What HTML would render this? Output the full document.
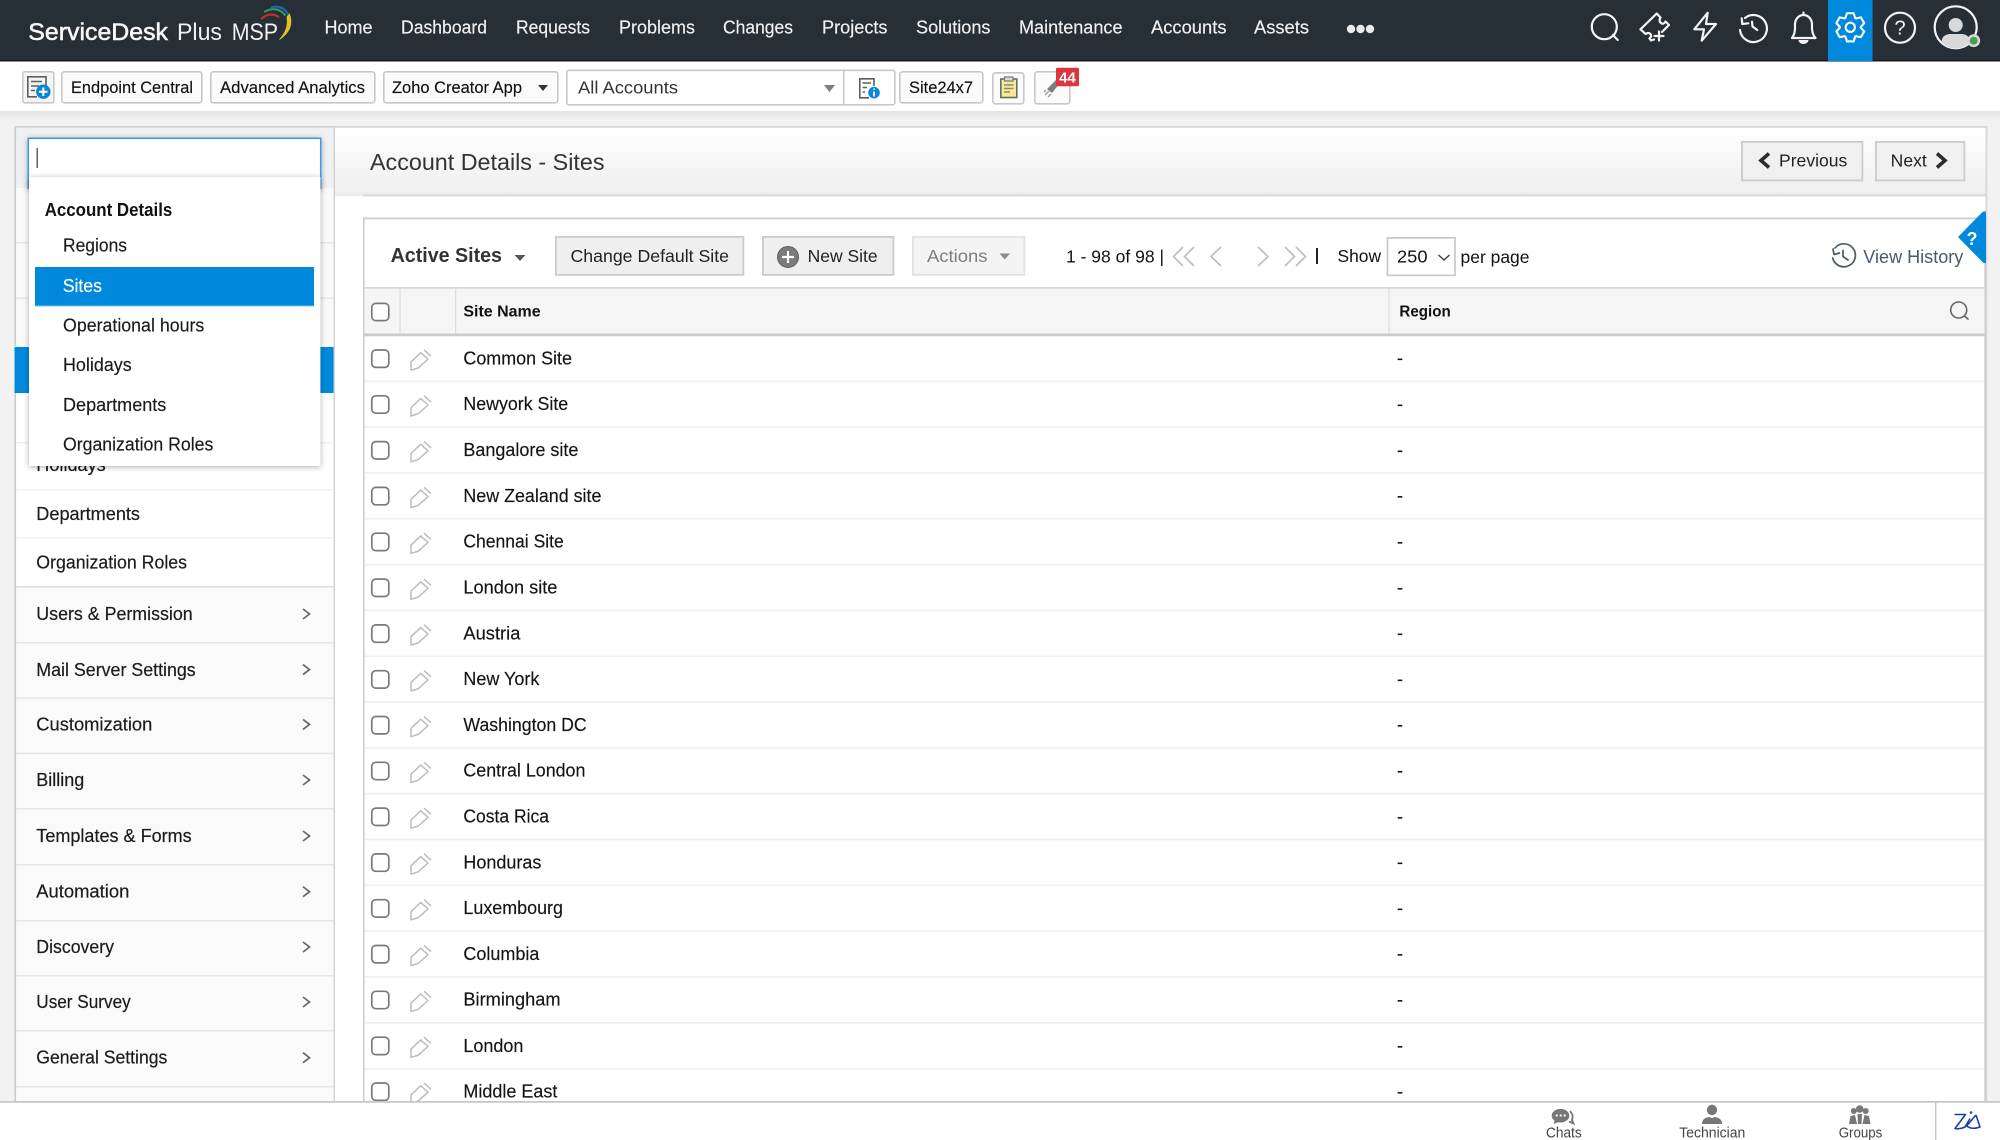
<!DOCTYPE html>
<html lang="en">
<head>
<meta charset="utf-8">
<title>ServiceDesk Plus MSP - Account Details - Sites</title>
<style>
html,body{margin:0;padding:0;width:2000px;height:1140px;overflow:hidden;background:#f2f2f2}
svg{display:block;filter:blur(.3px)}
text{font-family:"Liberation Sans",Arial,sans-serif;white-space:pre}
.nav{font-size:18px;fill:#f0f2f3;stroke:#f0f2f3;stroke-width:.15}
.tb{font-size:17px;fill:#111;stroke:#111;stroke-width:.15}
.side{font-size:18px;fill:#1c1c1c;stroke:#1c1c1c;stroke-width:.2}
.dd{font-size:18px;fill:#1a1a1a;stroke:#1a1a1a;stroke-width:.15}
.row{font-size:18px;fill:#141414;stroke:#141414;stroke-width:.15}
.btn{font-size:17.5px;fill:#222}
.th{font-size:16px;font-weight:bold;fill:#111}
.bot{font-size:14.5px;fill:#444}
.ic{fill:none;stroke:#f2f4f5;stroke-width:2.2;stroke-linecap:round;stroke-linejoin:round}
.pg{fill:none;stroke:#bcbcbc;stroke-width:1.6}
.ch{fill:none;stroke:#666;stroke-width:1.7}
.sep{fill:#efefef}
.cb{fill:#fff;stroke:#7a7a7a;stroke-width:1.7}
</style>
</head>
<body>
<svg xmlns="http://www.w3.org/2000/svg" width="2000" height="1140" viewBox="0 0 2000 1140">
<defs>
<linearGradient id="hg" x1="0" y1="0" x2="0" y2="1"><stop offset="0" stop-color="#fff"/><stop offset="1" stop-color="#eeeeee"/></linearGradient>
<linearGradient id="sh" x1="0" y1="0" x2="0" y2="1"><stop offset="0" stop-color="#e3e3e3"/><stop offset="1" stop-color="#f3f3f3"/></linearGradient>
<filter id="ds" x="-10%" y="-10%" width="120%" height="120%"><feDropShadow dx="0" dy="1" stdDeviation="3" flood-color="#000" flood-opacity=".32"/></filter>
<g id="pen" fill="none" stroke="#bcbcbc" stroke-width="1.5" stroke-linejoin="round"><path d="M411 3.2 L420.7 -6 L428 .5 L418.3 9.2 L411 11.5 Z"/><path d="M424 -8.8 L431 -2.5"/></g>
</defs>

<!-- page background -->
<rect width="2000" height="1140" fill="#f2f2f2"/>
<rect x="0" y="111" width="2000" height="10" fill="url(#sh)"/>

<!-- header -->
<rect x="0" y="0" width="2000" height="60" fill="#262e36"/>
<rect x="0" y="60" width="2000" height="1.5" fill="#14191e"/>
<rect x="1828" y="0" width="44.5" height="61" fill="#0089dc"/>
<text x="28.3" y="40" font-size="24" fill="#f6f7f8" stroke="#f6f7f8" stroke-width=".55" textLength="139.7" lengthAdjust="spacingAndGlyphs">ServiceDesk</text>
<text x="177" y="40" font-size="24" fill="#f0f1f2" textLength="45" lengthAdjust="spacingAndGlyphs">Plus</text>
<text x="231.7" y="40" font-size="24" fill="#f0f1f2" textLength="46.3" lengthAdjust="spacingAndGlyphs">MSP</text>
<g fill="none" stroke-linecap="round">
<path d="M261.7 18.5 Q270 11.5 278.3 16.7" stroke="#c62f2f" stroke-width="2.2"/>
<path d="M265 11.5 Q277 5.5 285 15" stroke="#2f9a48" stroke-width="2.2"/>
<path d="M271.7 7.3 Q285 4 290 19" stroke="#1c62b5" stroke-width="2.4"/>
</g>
<path d="M289.5 14 Q295 29 279.5 39.5 Q289 29 287 17 Z" fill="#e6bf2c" stroke="#e6bf2c" stroke-width=".8"/>
<text class="nav" x="324.5" y="33.5" textLength="48" lengthAdjust="spacingAndGlyphs">Home</text>
<text class="nav" x="401" y="33.5" textLength="86" lengthAdjust="spacingAndGlyphs">Dashboard</text>
<text class="nav" x="516" y="33.5" textLength="74" lengthAdjust="spacingAndGlyphs">Requests</text>
<text class="nav" x="619" y="33.5" textLength="76" lengthAdjust="spacingAndGlyphs">Problems</text>
<text class="nav" x="723" y="33.5" textLength="70" lengthAdjust="spacingAndGlyphs">Changes</text>
<text class="nav" x="822" y="33.5" textLength="65.5" lengthAdjust="spacingAndGlyphs">Projects</text>
<text class="nav" x="916" y="33.5" textLength="74.5" lengthAdjust="spacingAndGlyphs">Solutions</text>
<text class="nav" x="1019" y="33.5" textLength="103.5" lengthAdjust="spacingAndGlyphs">Maintenance</text>
<text class="nav" x="1151" y="33.5" textLength="75.5" lengthAdjust="spacingAndGlyphs">Accounts</text>
<text class="nav" x="1254" y="33.5" textLength="55" lengthAdjust="spacingAndGlyphs">Assets</text>
<g fill="#e8eaec"><circle cx="1351" cy="29" r="4.2"/><circle cx="1360.5" cy="29" r="4.2"/><circle cx="1370" cy="29" r="4.2"/></g>

<!-- header icons -->
<g class="ic">
<circle cx="1604.3" cy="26.7" r="12.5"/><path d="M1613 35 L1617.7 40"/>
<path d="M1640.5 29.3 L1656.7 13.5 L1660.5 17.5 Q1658.5 21 1661 23 Q1663.5 25 1665.5 21.5 L1669 25 L1662 32"/>
<path d="M1640.5 29.3 L1645.5 34 Q1648.5 32 1650.5 34 Q1652 36.5 1649.5 38.5 L1651 40.5 L1654 39.5"/>
<path d="M1659 31.5 V40.5 M1654.5 36 H1663.5"/>
<path d="M1707.7 12.7 L1694.3 29.3 L1704 29.3 L1701.7 40.7 L1716 24 L1706 24 Z"/>
<path d="M1745 18 A13.5 13.5 0 1 1 1740 30"/><path d="M1741.7 18.3 L1742.3 24 L1748.3 23.3"/><path d="M1752 21.7 L1752.5 26.5 L1757.3 30"/>
<path d="M1792 38 Q1795 34 1795 28 V24.5 A8.5 9.5 0 0 1 1812 24.5 V28 Q1812 34 1815.5 38 Z"/><path d="M1803.5 12.5 V15"/>
<g transform="translate(1850.3 27.3)"><polygon points="-4.9,-9.3 -3.3,-14.1 3.3,-14.1 4.9,-9.3 5.6,-8.9 10.6,-9.9 13.9,-4.2 10.5,-.4 10.5,.4 13.9,4.2 10.6,9.9 5.6,8.9 4.9,9.3 3.3,14.1 -3.3,14.1 -4.9,9.3 -5.6,8.9 -10.6,9.9 -13.9,4.2 -10.5,.4 -10.5,-.4 -13.9,-4.2 -10.6,-9.9 -5.6,-8.9"/><circle r="4.6"/></g>
<circle cx="1900" cy="27.7" r="15"/>
<circle cx="1955.7" cy="27.3" r="21"/>
</g>
<path d="M1798.5 40 H1808.5 A5 4 0 0 1 1798.5 40 Z" fill="#f2f4f5"/>
<text x="1900" y="34.5" font-size="20" fill="#f2f4f5" text-anchor="middle">?</text>
<circle cx="1955.7" cy="25" r="7" fill="#d9d9d9"/>
<path d="M1941.5 42 Q1942 34.5 1950 34 H1962 Q1969.5 34.5 1970 42 Q1964 48.5 1955.7 48.5 Q1947 48.5 1941.5 42 Z" fill="#d9d9d9"/>
<circle cx="1973.7" cy="40.7" r="5.2" fill="#4a9f4e" stroke="#d9d9d9" stroke-width="2.5"/>

<!-- toolbar -->
<rect x="0" y="61.5" width="2000" height="49.5" fill="#fff"/>
<g fill="#fbfbfb" stroke="#c8c8c8" stroke-width="1.6">
<rect x="22.8" y="71.8" width="31" height="31" rx="2" fill="#f4f4f4"/>
<rect x="61.8" y="71.8" width="140" height="31" rx="2.5"/>
<rect x="210.8" y="71.8" width="164" height="31" rx="2.5"/>
<rect x="383.8" y="71.8" width="174" height="31" rx="2.5"/>
<rect x="566.8" y="70.3" width="328" height="34.5" rx="2" fill="#fff"/>
<rect x="899.8" y="71.8" width="83" height="31" rx="2.5"/>
<rect x="992.8" y="72.8" width="31" height="31" rx="2.5"/>
<rect x="1034.8" y="71.8" width="35" height="32" rx="2.5"/>
</g>
<rect x="843" y="70" width="1.5" height="35" fill="#c8c8c8"/>
<g fill="none" stroke="#5a5f64" stroke-width="1.6">
<path d="M46 88 V76.8 H27.8 V96.8 H37"/><path d="M31 81.5 H42 M31 86 H39 M31 90.5 H35"/>
<path d="M874 86 V78.8 H859.8 V97.8 H869"/><path d="M862.5 83 H871 M862.5 87.5 H867 M862.5 92 H865"/>
</g>
<circle cx="43.3" cy="91.7" r="7.2" fill="#0a86d8"/><path d="M43.3 87.5 V96 M39 91.7 H47.5" stroke="#fff" stroke-width="2"/>
<circle cx="874" cy="92.7" r="5.8" fill="#0a86d8"/><path d="M874 91.5 V96.5 M874 88.5 V89.8" stroke="#fff" stroke-width="1.7"/>
<rect x="1000.8" y="79" width="16" height="18.5" fill="#f8e998" stroke="#6a6a6a" stroke-width="1.6"/>
<rect x="1004.5" y="77" width="8.5" height="4" fill="#ddd" stroke="#777" stroke-width="1.2"/>
<path d="M1004 85 H1013.5 M1004 88.5 H1013.5 M1004 92 H1010" stroke="#8f8a60" stroke-width="1.5"/>
<path d="M1047 89 L1056 80 L1060 83 L1052 93 Z" fill="#7d7d7d"/>
<path d="M1045 95 L1049 91 M1048 97 L1051 94 M1044 92 L1046 90" stroke="#9c9c9c" stroke-width="1.4"/>
<rect x="1056" y="67.7" width="23" height="18.5" rx="1.5" fill="#d9363e"/>
<text x="1067.5" y="82.3" font-size="15" font-weight="bold" fill="#fff" text-anchor="middle">44</text>
<text class="tb" x="71" y="93" textLength="122" lengthAdjust="spacingAndGlyphs">Endpoint Central</text>
<text class="tb" x="220" y="93" textLength="145" lengthAdjust="spacingAndGlyphs">Advanced Analytics</text>
<text class="tb" x="392" y="93" textLength="130" lengthAdjust="spacingAndGlyphs">Zoho Creator App</text>
<path d="M538 85 H548 L543 91 Z" fill="#333"/>
<text class="tb" x="578" y="93.3" textLength="100" lengthAdjust="spacingAndGlyphs" style="fill:#333;stroke:none;font-size:17.5px">All Accounts</text>
<path d="M824 85 H835 L829.5 92 Z" fill="#7d7d7d"/>
<text class="tb" x="909" y="93" textLength="64" lengthAdjust="spacingAndGlyphs">Site24x7</text>

<!-- sidebar -->
<rect x="15" y="127" width="320" height="980" fill="#fff"/>
<rect x="16" y="128" width="318" height="60" fill="#eff1f3"/>
<rect x="16" y="188" width="318" height="159" fill="#fafafa"/>
<rect x="16" y="587" width="318" height="520" fill="#fafafa"/>
<rect x="14.5" y="347" width="319.5" height="46" fill="#0089dc"/>
<rect x="14.5" y="126.5" width="1.6" height="220" fill="#cbcbcb"/>
<rect x="14.5" y="393" width="1.6" height="713" fill="#cbcbcb"/>
<rect x="333.5" y="126.5" width="1.6" height="980" fill="#d2d2d2"/>
<rect x="14.5" y="126" width="320" height="1.8" fill="#d2d2d2"/>
<g fill="#e6e6e6">
<rect x="16" y="242" width="318" height="1.5"/><rect x="16" y="297.5" width="318" height="1.5"/>
<rect x="16" y="442" width="318" height="1.5" fill="#f0f0f0"/><rect x="16" y="489" width="318" height="1.5" fill="#f2f2f2"/>
<rect x="16" y="537" width="318" height="1.5" fill="#f2f2f2"/>
<rect x="16" y="586" width="318" height="1.5" fill="#dedede"/>
<rect x="16" y="642" width="318" height="1.5"/><rect x="16" y="697.5" width="318" height="1.5"/><rect x="16" y="752.7" width="318" height="1.5"/>
<rect x="16" y="808" width="318" height="1.5"/><rect x="16" y="864" width="318" height="1.5"/><rect x="16" y="920" width="318" height="1.5"/>
<rect x="16" y="975" width="318" height="1.5"/><rect x="16" y="1030" width="318" height="1.5"/><rect x="16" y="1086" width="318" height="1.5"/>
</g>
<text class="side" x="36.3" y="471" textLength="69.4" lengthAdjust="spacingAndGlyphs">Holidays</text>
<text class="side" x="36.3" y="520" textLength="103.7" lengthAdjust="spacingAndGlyphs">Departments</text>
<text class="side" x="36.3" y="568.5" textLength="150.7" lengthAdjust="spacingAndGlyphs">Organization Roles</text>
<text class="side" x="36.3" y="620" textLength="156.4" lengthAdjust="spacingAndGlyphs">Users &amp; Permission</text>
<text class="side" x="36.3" y="675.8" textLength="159.4" lengthAdjust="spacingAndGlyphs">Mail Server Settings</text>
<text class="side" x="36.3" y="730.6" textLength="116" lengthAdjust="spacingAndGlyphs">Customization</text>
<text class="side" x="36.3" y="786.2" textLength="48" lengthAdjust="spacingAndGlyphs">Billing</text>
<text class="side" x="36.3" y="842" textLength="155.4" lengthAdjust="spacingAndGlyphs">Templates &amp; Forms</text>
<text class="side" x="36.3" y="897.6" textLength="93" lengthAdjust="spacingAndGlyphs">Automation</text>
<text class="side" x="36.3" y="953" textLength="77.7" lengthAdjust="spacingAndGlyphs">Discovery</text>
<text class="side" x="36.3" y="1008" textLength="94.4" lengthAdjust="spacingAndGlyphs">User Survey</text>
<text class="side" x="36.3" y="1063.6" textLength="131" lengthAdjust="spacingAndGlyphs">General Settings</text>
<path class="ch" stroke-width="1.6" d="M303 609 L309.5 614 L303 619 M303 664.6 L309.5 669.6 L303 674.6 M303 719.4 L309.5 724.4 L303 729.4 M303 775 L309.5 780 L303 785 M303 831 L309.5 836 L303 841 M303 886.7 L309.5 891.7 L303 896.7 M303 942 L309.5 947 L303 952 M303 997 L309.5 1002 L303 1007 M303 1052.7 L309.5 1057.7 L303 1062.7"/>

<!-- main panel -->
<rect x="335" y="127" width="1651" height="980" fill="#fff"/>
<rect x="335" y="127" width="1651" height="68" fill="url(#hg)"/>
<rect x="335" y="126" width="1651" height="1.8" fill="#d8d8d8"/>
<rect x="335" y="194.5" width="28" height="1.6" fill="#ececec"/>
<rect x="363" y="194.5" width="1623" height="1.8" fill="#d6d6d6"/>
<rect x="1985.5" y="126" width="1.8" height="980" fill="#d8d8d8"/>
<text x="370" y="170" font-size="23.5" fill="#333" textLength="234.5" lengthAdjust="spacingAndGlyphs">Account Details - Sites</text>
<g fill="#f0f0f0" stroke="#cbcbcb" stroke-width="1.8">
<rect x="1741.9" y="141.9" width="120.5" height="38.5"/>
<rect x="1875.9" y="141.9" width="88.5" height="38.5"/>
</g>
<path d="M1769 153.5 L1761 160.5 L1769 167.5" fill="none" stroke="#2c2c2c" stroke-width="3.6"/>
<path d="M1937 153.5 L1945 160.5 L1937 167.5" fill="none" stroke="#2c2c2c" stroke-width="3.6"/>
<text class="btn" x="1779" y="166.7" textLength="68.3" lengthAdjust="spacingAndGlyphs">Previous</text>
<text class="btn" x="1890.7" y="166.7" textLength="36" lengthAdjust="spacingAndGlyphs">Next</text>

<!-- table card -->
<rect x="363" y="217.5" width="1622.5" height="1.8" fill="#cdcdcd"/>
<rect x="363" y="217.5" width="1.6" height="890" fill="#cdcdcd"/>
<rect x="1984.3" y="217.5" width="1.6" height="890" fill="#cdcdcd"/>
<text x="390.6" y="262" font-size="20.5" font-weight="bold" fill="#333" textLength="111.4" lengthAdjust="spacingAndGlyphs">Active Sites</text>
<path d="M514.5 255 H525.5 L520 261 Z" fill="#555"/>
<g stroke-width="1.8">
<rect x="555.9" y="236.9" width="187.5" height="38" fill="#efefef" stroke="#cbcbcb"/>
<rect x="762.9" y="236.9" width="130.5" height="38" fill="#efefef" stroke="#cbcbcb"/>
<rect x="912.9" y="236.9" width="111.5" height="38" fill="#f4f4f4" stroke="#e2e2e2"/>
</g>
<text class="btn" x="570.5" y="262" textLength="158.5" lengthAdjust="spacingAndGlyphs">Change Default Site</text>
<circle cx="788" cy="257" r="10.5" fill="#7b7b7b" stroke="#5e5e5e" stroke-width="1"/>
<path d="M788 251 V263 M782 257 H794" stroke="#fff" stroke-width="2.2"/>
<text class="btn" x="807.6" y="262" textLength="70" lengthAdjust="spacingAndGlyphs">New Site</text>
<text class="btn" x="927" y="262" textLength="60.5" lengthAdjust="spacingAndGlyphs" style="fill:#7d7d7d">Actions</text>
<path d="M999.5 253.5 H1010 L1004.7 259.5 Z" fill="#8c8c8c"/>
<text class="btn" x="1066" y="262.5" textLength="98" lengthAdjust="spacingAndGlyphs" style="fill:#111">1 - 98 of 98 |</text>
<path class="pg" d="M1183 247 L1173.5 256.5 L1183 266 M1194 247 L1184.5 256.5 L1194 266 M1221 247 L1211 256.5 L1221 266 M1258 247 L1268 256.5 L1258 266 M1285 247 L1294.5 256.5 L1285 266 M1296 247 L1305.5 256.5 L1296 266"/>
<rect x="1316" y="248" width="2" height="16" fill="#222"/>
<text class="btn" x="1337.5" y="262" textLength="43.5" lengthAdjust="spacingAndGlyphs" style="fill:#111">Show</text>
<rect x="1387.5" y="237.9" width="67.5" height="37.5" fill="#fff" stroke="#c8c8c8" stroke-width="1.7"/>
<text class="btn" x="1397" y="262.5" textLength="30.5" lengthAdjust="spacingAndGlyphs" style="fill:#111">250</text>
<path d="M1438.5 255 L1444 260 L1449.5 255" fill="none" stroke="#444" stroke-width="1.5"/>
<text class="btn" x="1460.5" y="263" textLength="69" lengthAdjust="spacingAndGlyphs" style="fill:#111">per page</text>
<g fill="none" stroke="#4a5a68" stroke-width="1.7" stroke-linecap="round" stroke-linejoin="round" transform="translate(1 0)">
<path d="M1834 248 A11.5 11.5 0 1 1 1831.7 258"/><path d="M1832 249 L1833 254.5 L1838.5 253"/><path d="M1842 250.5 V256.5 L1847 260"/>
</g>
<text x="1863.3" y="263" font-size="18" fill="#4a5a68" textLength="100" lengthAdjust="spacingAndGlyphs">View History</text>
<path d="M1958 237 L1982 212.5 Q1983.5 211 1986 211.5 V263 Q1984 263.5 1982.5 262 Z" fill="#0089dc"/>
<text x="1972" y="245" font-size="18" font-weight="bold" fill="#fff" text-anchor="middle">?</text>

<!-- table header -->
<rect x="364.5" y="288" width="1620" height="46" fill="#f5f5f5"/>
<rect x="364.5" y="287" width="1620" height="1.8" fill="#d8d8d8"/>
<rect x="364.5" y="333.5" width="1620" height="2.8" fill="#cccccc"/>
<g fill="#dcdcdc"><rect x="399.5" y="288" width="1.2" height="46"/><rect x="455" y="288" width="1.2" height="46"/><rect x="1388.5" y="288" width="1.2" height="46"/></g>
<rect class="cb" x="371.8" y="303.4" width="17" height="17.2" rx="4"/>
<text class="th" x="463.4" y="316.6" textLength="77.2" lengthAdjust="spacingAndGlyphs">Site Name</text>
<text class="th" x="1399.4" y="316.6" textLength="51.3" lengthAdjust="spacingAndGlyphs">Region</text>
<circle cx="1958.7" cy="310" r="8" fill="none" stroke="#666" stroke-width="1.6"/>
<path d="M1964.5 316 L1968.5 319.5" stroke="#666" stroke-width="1.6"/>

<!-- table rows -->
<g>
<rect class="sep" x="365" y="380.5" width="1619" height="1.7"/>
<rect class="sep" x="365" y="426.3" width="1619" height="1.7"/>
<rect class="sep" x="365" y="472.1" width="1619" height="1.7"/>
<rect class="sep" x="365" y="517.9" width="1619" height="1.7"/>
<rect class="sep" x="365" y="563.7" width="1619" height="1.7"/>
<rect class="sep" x="365" y="609.5" width="1619" height="1.7"/>
<rect class="sep" x="365" y="655.4" width="1619" height="1.7"/>
<rect class="sep" x="365" y="701.2" width="1619" height="1.7"/>
<rect class="sep" x="365" y="747" width="1619" height="1.7"/>
<rect class="sep" x="365" y="792.8" width="1619" height="1.7"/>
<rect class="sep" x="365" y="838.6" width="1619" height="1.7"/>
<rect class="sep" x="365" y="884.4" width="1619" height="1.7"/>
<rect class="sep" x="365" y="930.2" width="1619" height="1.7"/>
<rect class="sep" x="365" y="976" width="1619" height="1.7"/>
<rect class="sep" x="365" y="1022" width="1619" height="1.7"/>
<rect class="sep" x="365" y="1068" width="1619" height="1.7"/>
</g>
<g>
<rect class="cb" x="371.8" y="350" width="17" height="17.4" rx="4"/><use href="#pen" y="358.7"/><text class="row" x="463.4" y="364.4" textLength="108.6" lengthAdjust="spacingAndGlyphs">Common Site</text><text class="row" x="1397" y="364.2">-</text>
<rect class="cb" x="371.8" y="395.8" width="17" height="17.4" rx="4"/><use href="#pen" y="404.5"/><text class="row" x="463.4" y="410.2" textLength="104.8" lengthAdjust="spacingAndGlyphs">Newyork Site</text><text class="row" x="1397" y="410">-</text>
<rect class="cb" x="371.8" y="441.6" width="17" height="17.4" rx="4"/><use href="#pen" y="450.3"/><text class="row" x="463.4" y="456" textLength="115" lengthAdjust="spacingAndGlyphs">Bangalore site</text><text class="row" x="1397" y="455.8">-</text>
<rect class="cb" x="371.8" y="487.4" width="17" height="17.4" rx="4"/><use href="#pen" y="496.1"/><text class="row" x="463.4" y="501.8" textLength="138" lengthAdjust="spacingAndGlyphs">New Zealand site</text><text class="row" x="1397" y="501.6">-</text>
<rect class="cb" x="371.8" y="533.2" width="17" height="17.4" rx="4"/><use href="#pen" y="541.9"/><text class="row" x="463.4" y="547.6" textLength="100.4" lengthAdjust="spacingAndGlyphs">Chennai Site</text><text class="row" x="1397" y="547.4">-</text>
<rect class="cb" x="371.8" y="579.1" width="17" height="17.4" rx="4"/><use href="#pen" y="587.8"/><text class="row" x="463.4" y="593.5" textLength="94" lengthAdjust="spacingAndGlyphs">London site</text><text class="row" x="1397" y="593.3">-</text>
<rect class="cb" x="371.8" y="624.9" width="17" height="17.4" rx="4"/><use href="#pen" y="633.6"/><text class="row" x="463.4" y="639.3" textLength="57" lengthAdjust="spacingAndGlyphs">Austria</text><text class="row" x="1397" y="639.1">-</text>
<rect class="cb" x="371.8" y="670.7" width="17" height="17.4" rx="4"/><use href="#pen" y="679.4"/><text class="row" x="463.4" y="685.1" textLength="76" lengthAdjust="spacingAndGlyphs">New York</text><text class="row" x="1397" y="684.9">-</text>
<rect class="cb" x="371.8" y="716.5" width="17" height="17.4" rx="4"/><use href="#pen" y="725.2"/><text class="row" x="463.4" y="730.9" textLength="123.3" lengthAdjust="spacingAndGlyphs">Washington DC</text><text class="row" x="1397" y="730.7">-</text>
<rect class="cb" x="371.8" y="762.3" width="17" height="17.4" rx="4"/><use href="#pen" y="771"/><text class="row" x="463.4" y="776.7" textLength="122" lengthAdjust="spacingAndGlyphs">Central London</text><text class="row" x="1397" y="776.5">-</text>
<rect class="cb" x="371.8" y="808.1" width="17" height="17.4" rx="4"/><use href="#pen" y="816.8"/><text class="row" x="463.4" y="822.5" textLength="85.6" lengthAdjust="spacingAndGlyphs">Costa Rica</text><text class="row" x="1397" y="822.3">-</text>
<rect class="cb" x="371.8" y="853.9" width="17" height="17.4" rx="4"/><use href="#pen" y="862.6"/><text class="row" x="463.4" y="868.3" textLength="78" lengthAdjust="spacingAndGlyphs">Honduras</text><text class="row" x="1397" y="868.1">-</text>
<rect class="cb" x="371.8" y="899.7" width="17" height="17.4" rx="4"/><use href="#pen" y="908.4"/><text class="row" x="463.4" y="914.1" textLength="99.6" lengthAdjust="spacingAndGlyphs">Luxembourg</text><text class="row" x="1397" y="913.9">-</text>
<rect class="cb" x="371.8" y="945.5" width="17" height="17.4" rx="4"/><use href="#pen" y="954.2"/><text class="row" x="463.4" y="959.9" textLength="76" lengthAdjust="spacingAndGlyphs">Columbia</text><text class="row" x="1397" y="959.7">-</text>
<rect class="cb" x="371.8" y="991.3" width="17" height="17.4" rx="4"/><use href="#pen" y="1000"/><text class="row" x="463.4" y="1005.7" textLength="97.2" lengthAdjust="spacingAndGlyphs">Birmingham</text><text class="row" x="1397" y="1005.5">-</text>
<rect class="cb" x="371.8" y="1037.2" width="17" height="17.4" rx="4"/><use href="#pen" y="1045.9"/><text class="row" x="463.4" y="1051.8" textLength="60" lengthAdjust="spacingAndGlyphs">London</text><text class="row" x="1397" y="1051.5">-</text>
<rect class="cb" x="371.8" y="1083" width="17" height="17.4" rx="4"/><use href="#pen" y="1091.7"/><text class="row" x="463.4" y="1097.6" textLength="94" lengthAdjust="spacingAndGlyphs">Middle East</text><text class="row" x="1397" y="1097.3">-</text>
</g>

<!-- settings search dropdown -->
<rect x="28.3" y="138.3" width="292.4" height="50" fill="#fff" stroke="#3d9be0" stroke-width="1.5" filter="url(#ds)"/>
<rect x="36.5" y="148" width="1.4" height="20" fill="#555"/>
<rect x="29" y="177" width="291.4" height="289" fill="#fff" filter="url(#ds)"/>
<rect x="35" y="267" width="279" height="39" fill="#0089dc"/>
<rect x="35" y="305.5" width="279" height="1" fill="#7cc0ea"/>
<text x="44.7" y="216" font-size="18" font-weight="bold" fill="#111" textLength="127.6" lengthAdjust="spacingAndGlyphs">Account Details</text>
<text class="dd" x="63" y="251.7" textLength="64" lengthAdjust="spacingAndGlyphs">Regions</text>
<text class="dd" x="62.7" y="292" textLength="39.3" lengthAdjust="spacingAndGlyphs" style="fill:#fff;stroke:#fff">Sites</text>
<text class="dd" x="63" y="331.7" textLength="141.3" lengthAdjust="spacingAndGlyphs">Operational hours</text>
<text class="dd" x="63" y="371" textLength="68.7" lengthAdjust="spacingAndGlyphs">Holidays</text>
<text class="dd" x="63" y="411" textLength="103.3" lengthAdjust="spacingAndGlyphs">Departments</text>
<text class="dd" x="63" y="450.3" textLength="150.3" lengthAdjust="spacingAndGlyphs">Organization Roles</text>

<!-- bottom bar -->
<rect x="0" y="1102" width="2000" height="38" fill="#fff"/>
<rect x="0" y="1101" width="2000" height="1.8" fill="#c8c8c8"/>
<rect x="1935" y="1102" width="1.4" height="38" fill="#c8c8c8"/>
<path d="M1570 1111 Q1574 1115 1572 1120 L1573.5 1123.5 L1569 1121.5" fill="none" stroke="#777" stroke-width="1.8"/>
<ellipse cx="1560.5" cy="1115.7" rx="8.8" ry="6.8" fill="#777"/>
<path d="M1555 1120 L1553.5 1124 L1560 1121.5 Z" fill="#777"/>
<g fill="#fff"><circle cx="1556.7" cy="1115.5" r="1.1"/><circle cx="1560.7" cy="1115.5" r="1.1"/><circle cx="1564.7" cy="1115.5" r="1.1"/></g>
<text class="bot" x="1546" y="1137.3" textLength="35.7" lengthAdjust="spacingAndGlyphs">Chats</text>
<circle cx="1712" cy="1110" r="5.2" fill="#777"/>
<path d="M1702 1124 Q1702 1118 1709 1117 L1712 1118 L1715 1117 Q1722 1118 1722 1124 Z" fill="#777"/>
<text class="bot" x="1679.3" y="1137.3" textLength="66" lengthAdjust="spacingAndGlyphs">Technician</text>
<g fill="#777"><circle cx="1859.7" cy="1109" r="3.8"/><circle cx="1853.8" cy="1111" r="3"/><circle cx="1865.7" cy="1111" r="3"/>
<path d="M1849 1124 L1850.5 1116 L1855 1115 L1857 1124 Z M1870.5 1124 L1869 1116 L1864.5 1115 L1862.5 1124 Z M1857.5 1114 H1862 L1861.5 1124 H1858 Z"/></g>
<text class="bot" x="1838.7" y="1137.3" textLength="43.6" lengthAdjust="spacingAndGlyphs">Groups</text>
<path d="M1954.5 1114.5 H1965.5 L1955 1128.5 Q1960 1129.5 1965 1127 L1970 1118.5 M1976 1115 L1980 1127 Q1972 1130 1966.5 1126 L1976 1115" fill="none" stroke="#1d3fa5" stroke-width="1.6" stroke-linejoin="round"/>
<circle cx="1971" cy="1112.5" r="1.3" fill="#1d3fa5"/>
</svg>
</body>
</html>
